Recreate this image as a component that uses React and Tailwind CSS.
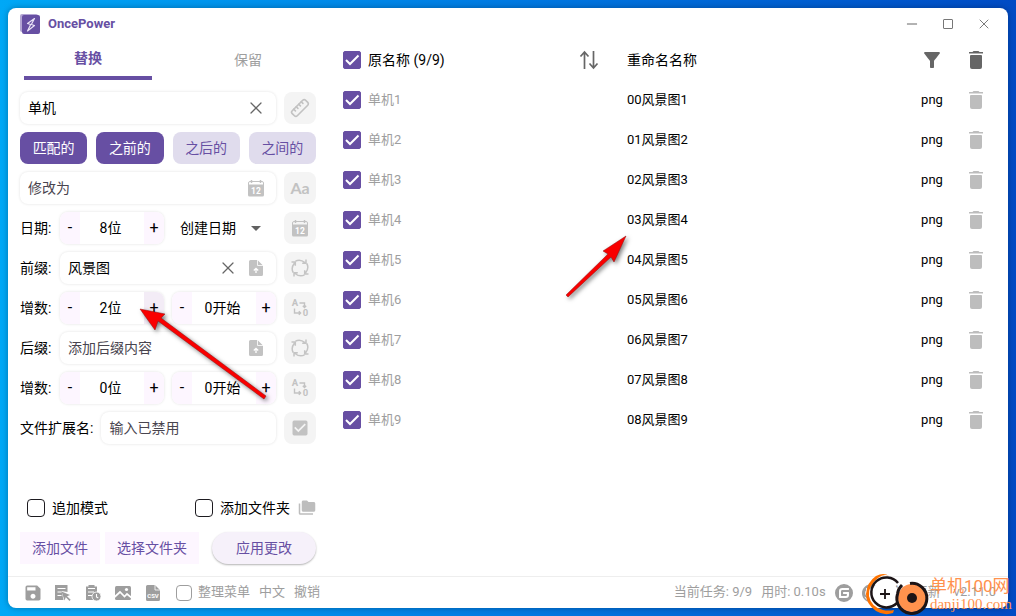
import React, { useState } from "react";
import { MdSave, MdFilterAlt, MdCheckBox, MdFolderCopy, MdArrowDropDown } from "react-icons/md";
import { SiGitee, SiGithub } from "react-icons/si";
import { Ruler, X, Minus } from "lucide-react";

const files = [1, 2, 3, 4, 5, 6, 7, 8, 9].map((n) => ({
  id: n,
  name: `单机${n}`,
  newName: `0${n - 1}风景图${n}`,
  ext: "png",
}));

/* ---------- icons ---------- */

const LogoIcon = () => (
  <svg className="w-5 h-5" viewBox="0 0 20 20" aria-hidden="true">
    <rect x="0" y="0" width="18" height="18" rx="2" fill="#b3a5d3" />
    <rect x="2" y="1" width="18" height="19" rx="2" fill="#674fa3" />
    <path d="M14.5 4.5 7.5 9.5l3.2 1L7.500 17l7-5.500-3.200-1z" fill="none" stroke="#e9e2f6" strokeWidth="1.200" strokeLinejoin="round" />
  </svg>
);

const CalendarIcon = () => (
  <svg className="w-4 h-[18px]" viewBox="0 0 16 18" aria-hidden="true">
    <path d="M2 2.500h12a1.500 1.500 0 0 1 1.500 1.500v2H.5V4A1.500 1.500 0 0 1 2 2.500z" fill="none" stroke="#c2c2c2" />
    <path d="M0 6h16v10a1.500 1.500 0 0 1-1.500 1.500h-13A1.500 1.500 0 0 1 0 16z" fill="#c2c2c2" />
    <path d="M3.500 1v3M12.500 1v3" stroke="#c2c2c2" strokeWidth="1.500" />
    <text x="8" y="15" textAnchor="middle" fontSize="8.500" fontWeight="700" fill="#fff">12</text>
  </svg>
);

const FileUpIcon = () => (
  <svg className="w-4 h-[18px]" viewBox="0 0 16 18" aria-hidden="true">
    <path d="M2.500 1h7L15 6.500v9a1.500 1.500 0 0 1-1.500 1.500h-11A1.500 1.500 0 0 1 1 15.500v-13A1.500 1.500 0 0 1 2.500 1z" fill="#c2c2c2" />
    <path d="M9.500 1v5.500H15" fill="none" stroke="#fff" strokeWidth=".8" />
    <path d="M8 14V9.500M5.800 11.500 8 9.300l2.200 2.200" fill="none" stroke="#fff" strokeWidth="1.300" />
  </svg>
);

const CycleIcon = () => (
  <svg className="w-5 h-5" viewBox="0 0 20 20" fill="none" stroke="#c4c4c4" strokeWidth="1.500" aria-hidden="true">
    {[0, 90, 180, 270].map((angle) => (
      <path key={angle} transform={`rotate(${angle} 10 10)`} d="M5.500 3.200Q10 .6 15 4.500M16 1.500V5.300H12.200" />
    ))}
  </svg>
);

const AlphaNumIcon = () => (
  <svg className="w-5 h-5" viewBox="0 0 20 20" aria-hidden="true">
    <text x="5" y="8" textAnchor="middle" fontSize="9.500" fontWeight="700" fill="#c2c2c2">A</text>
    <text x="15.500" y="18" textAnchor="middle" fontSize="9.500" fontWeight="700" fill="#c2c2c2">0</text>
    <path d="M9.500 5h5v4M12.800 7.700l1.700 1.800 1.700-1.800M4.500 10.500v4.500h6M8.800 13.300l1.800 1.700-1.800 1.700" fill="none" stroke="#c2c2c2" strokeWidth="1.400" />
  </svg>
);

const SortIcon = () => (
  <svg className="w-5 h-5" viewBox="0 0 20 20" fill="none" stroke="#666" strokeWidth="1.700" aria-hidden="true">
    <path d="M5.500 19V2M1.500 6.500l4-4.500 4 4.500M14.500 1v17M10.500 13.500l4 4.500 4-4.500" />
  </svg>
);

const TrashIcon = () => (
  <svg className="w-4 h-[18px]" viewBox="0 0 16 18" fill="currentColor" aria-hidden="true">
    <path d="M5.500 0h5l1 1H15v1.500H1V1h3.500z" />
    <path d="M3 4h10a1 1 0 0 1 1 1v11a2 2 0 0 1-2 2H4a2 2 0 0 1-2-2V5a1 1 0 0 1 1-1z" />
  </svg>
);

const ListPointerIcon = () => (
  <svg className="w-4 h-4" viewBox="0 0 16 16" aria-hidden="true">
    <path d="M0 0h12.500v7l-6-1 2 9H0z" fill="#9e9e9e" />
    <path d="M2.500 3.500h8M2.500 7h4M2.500 10.500h4" stroke="#fff" strokeWidth="1.200" />
    <path d="M6.500 6.500 15 10l-3 1.200 3.700 3.500-1.200 1.200-3.700-3.600L9.500 15.500z" fill="#9e9e9e" />
  </svg>
);

const ClipboardClockIcon = () => (
  <svg className="w-4 h-4" viewBox="0 0 16 16" aria-hidden="true">
    <path d="M1 1.500h2.500V0h6v1.500H12V7l-4 1v7H1z" fill="#9e9e9e" />
    <path d="M3 3.500h7M3 7h6M3 10.500h4" stroke="#fff" strokeWidth="1.200" />
    <circle cx="11.500" cy="11.500" r="4.500" fill="#9e9e9e" stroke="#fff" strokeWidth=".8" />
    <path d="M11.500 9v3l1.800 1" fill="none" stroke="#fff" strokeWidth="1.100" />
  </svg>
);

const PictureIcon = () => (
  <svg className="w-[18px] h-4" viewBox="0 0 18 16" aria-hidden="true">
    <rect x="1" y="1" width="16" height="14" rx="1.500" fill="#9e9e9e" />
    <path d="M0 12.500l6-5.500 4.500 4.500L13 9l5 4" fill="none" stroke="#fff" strokeWidth="1.700" />
    <circle cx="12.500" cy="4.500" r="1.600" fill="#fff" />
  </svg>
);

const CsvIcon = () => (
  <svg className="w-4 h-[18px]" viewBox="0 0 16 18" aria-hidden="true">
    <path d="M2.500 1H10l5 5v9.500a1.500 1.500 0 0 1-1.500 1.500h-11A1.500 1.500 0 0 1 1 15.500v-13A1.500 1.500 0 0 1 2.500 1z" fill="#9e9e9e" />
    <path d="M10 1v5h5" fill="none" stroke="#fff" strokeWidth=".8" />
    <text x="8" y="13.500" textAnchor="middle" fontSize="6" fontWeight="700" fill="#fff">CSV</text>
  </svg>
);

/* ---------- form parts ---------- */

const Checkbox = ({ id, label, checked, onChange, className = "w-[18px] h-[18px] border-[#1d1b20]" }) => (
  <span className="inline-grid place-items-center shrink-0">
    <input
      id={id}
      type="checkbox"
      aria-label={label}
      checked={checked}
      onChange={onChange}
      className={`col-start-1 row-start-1 appearance-none border checked:rounded-xs checked:border-[#674fa3] checked:bg-[#674fa3] rounded ${className}`}
    />
    {checked && (
      <svg className="col-start-1 row-start-1 w-[18px] h-[18px] pointer-events-none" viewBox="0 0 18 18" fill="none" aria-hidden="true">
        <path d="M3 9l4 4 8.500-8.500" stroke="#fff" strokeWidth="2" />
      </svg>
    )}
  </span>
);

const Field = ({ id, label, value, onChange, placeholder, clearable, children }) => (
  <div className="flex-1 min-w-0 h-8 flex items-center gap-1 pl-2 pr-3 bg-white rounded-lg shadow-[0_0_3px_rgba(0,0,0,0.12)]">
    <input
      id={id}
      type="text"
      aria-label={label}
      value={value}
      onChange={(e) => onChange(e.target.value)}
      placeholder={placeholder}
      className="flex-1 min-w-0 bg-transparent text-black placeholder:text-[#49454f] focus:outline-none"
    />
    {clearable && (
      <button type="button" aria-label="清除" onClick={() => onChange("")} className="w-6 h-6 -mr-1 flex items-center justify-center text-[#666]">
        <X size={20} strokeWidth={1.5} />
      </button>
    )}
    {children}
  </div>
);

const Stepper = ({ value, unit, label, active, onChange }) => (
  <div role="group" aria-label={label} className="w-[104px] h-8 flex rounded-lg overflow-hidden bg-white shadow-[0_0_3px_rgba(0,0,0,0.12)]">
    <button type="button" aria-label="减少" className="w-5 bg-[#fdf6ff] text-base" onClick={() => onChange(Math.max(0, value - 1))}>-</button>
    <span className="flex-1 flex items-center justify-center pr-[3px]">{value}{unit}</span>
    <button type="button" aria-label="增加" className={`w-5 text-base ${active ? "bg-[#f3ecf6]" : "bg-[#fdf6ff]"}`} onClick={() => onChange(value + 1)}>+</button>
  </div>
);

const SquareButton = ({ label, children }) => (
  <button type="button" aria-label={label} className="w-8 h-8 shrink-0 flex items-center justify-center rounded-lg bg-[#f4f4f4] text-[#c2c2c2]">
    {children}
  </button>
);

const Row = ({ children }) => <div className="flex items-center gap-2">{children}</div>;

const RowLabel = ({ htmlFor, children }) => (
  <label htmlFor={htmlFor} className="w-8 shrink-0 whitespace-nowrap">{children}</label>
);

/* ---------- overlays ---------- */

const Arrows = () => (
  <svg className="absolute left-0 top-0 w-[1016px] h-[616px] pointer-events-none" viewBox="0 0 1016 616" aria-hidden="true">
    <g fill="#f90000" stroke="#8d1010" strokeWidth=".5" className="drop-shadow-[2px_2px_2px_rgba(0,0,0,0.5)]">
      <path d="M626 236 603 251 608 254 566 295 568 297 611 257 614 262z" />
      <path d="M140 309 155 330 158 321 264 399 266 396 161 318 165 314z" />
    </g>
  </svg>
);

const Watermark = () => (
  <div className="absolute right-1 bottom-0 flex items-center pointer-events-none">
    <svg className="w-[66px] h-[44px]" viewBox="0 0 66 44" fill="none" aria-hidden="true">
      <circle cx="21" cy="22" r="13" fill="#fff" />
      <path d="M25 4Q20 1 14 6Q4 14 5 24Q7 35 19 38Q24 39 30 38L29 41Q20 44 12 39Q2 32 2 22Q3 10 12 4Q20 0 25 4z" fill="#ff7300" />
      <path d="M34 11A15 15 0 1 0 33 31" stroke="#1c1416" strokeWidth="2.500" />
      <path d="M21 17v10M16 22h10" stroke="#1c1416" strokeWidth="1.800" />
      <circle cx="48" cy="26" r="14" fill="#ff924d" />
      <path d="M46 11.500A15 15 0 1 1 33.500 22Q34 17 38 13" stroke="#1c1416" strokeWidth="3" />
      <circle cx="48" cy="26" r="5" fill="#1c1416" />
    </svg>
    <div className="text-[#ff914d] whitespace-nowrap">
      <p className="text-[17px] leading-5">单机100网</p>
      <p className="text-[15px] leading-4 font-['Liberation_Serif',serif]">danji100.com</p>
    </div>
  </div>
);

const modes = ["匹配的", "之前的", "之后的", "之间的"];

const App = () => {
  const [tab, setTab] = useState("替换");
  const [activeModes, setActiveModes] = useState(["匹配的", "之前的"]);
  const [match, setMatch] = useState("单机");
  const [modify, setModify] = useState("");
  const [prefix, setPrefix] = useState("风景图");
  const [suffix, setSuffix] = useState("");
  const [ext, setExt] = useState("");
  const [dateDigits, setDateDigits] = useState(8);
  const [preDigits, setPreDigits] = useState(2);
  const [preStart, setPreStart] = useState(0);
  const [sufDigits, setSufDigits] = useState(0);
  const [sufStart, setSufStart] = useState(0);
  const [append, setAppend] = useState(false);
  const [addFolder, setAddFolder] = useState(false);
  const [tidy, setTidy] = useState(false);
  const [selected, setSelected] = useState(files.map((f) => f.id));

  const toggleMode = (mode) => {
    setActiveModes((prev) => (prev.includes(mode) ? prev.filter((m) => m !== mode) : [...prev, mode]));
  };

  const toggleFile = (id) => {
    setSelected((prev) => (prev.includes(id) ? prev.filter((i) => i !== id) : [...prev, id]));
  };

  const allSelected = selected.length === files.length;

  return (
    <div className="relative min-h-screen flex p-2 overflow-hidden bg-linear-to-r from-[#00a8f6] via-[#007ae2] to-[#004bc4] text-sm text-black font-[Roboto,'Noto_Sans_CJK_SC',sans-serif]">
      <div className="flex-1 min-w-0 flex flex-col bg-white rounded-lg shadow-[0_0_6px_rgba(0,0,0,0.3)]">
        {/* Title bar */}
        <header className="h-8 flex items-center px-3">
          <LogoIcon />
          <h1 className="ml-2 text-[13px] font-bold text-[#674fa3]">OncePower</h1>
          <div className="ml-auto flex gap-3 text-[#666]">
            <button type="button" aria-label="最小化" className="w-6 h-6 flex items-center justify-center">
              <Minus size={16} strokeWidth={1.5} />
            </button>
            <button type="button" aria-label="最大化" className="w-6 h-6 flex items-center justify-center">
              <span className="w-[10px] h-[10px] border border-[#777] rounded-[1px]"></span>
            </button>
            <button type="button" aria-label="关闭" className="w-6 h-6 flex items-center justify-center">
              <X size={16} strokeWidth={1.3} />
            </button>
          </div>
        </header>

        <main className="flex-1 flex">
          {/* Left panel */}
          <section className="w-80 shrink-0 flex flex-col">
            <div role="tablist" className="flex h-10 mb-3">
              {["替换", "保留"].map((name) => (
                <button
                  key={name}
                  type="button"
                  role="tab"
                  aria-selected={tab === name}
                  onClick={() => setTab(name)}
                  className={`flex-1 mx-4 ${tab === name ? "border-b-4 border-[#674fa3] text-[#674fa3] font-bold" : "text-[#9e9e9e]"}`}
                >
                  {name}
                </button>
              ))}
            </div>

            <form className="flex-1 flex flex-col gap-2 px-3" onSubmit={(e) => e.preventDefault()}>
              <Row>
                <Field id="match" label="匹配内容" value={match} onChange={setMatch} clearable />
                <SquareButton label="长度"><Ruler size={20} strokeWidth={2} className="-rotate-90" /></SquareButton>
              </Row>

              <div className="flex gap-[9px]">
                {modes.map((mode) => (
                  <button
                    key={mode}
                    type="button"
                    onClick={() => toggleMode(mode)}
                    className={`flex-1 h-8 rounded-lg ${activeModes.includes(mode) ? "bg-[#674fa3] text-white" : "bg-[#e0dced] text-[#674fa3]"}`}
                  >
                    {mode}
                  </button>
                ))}
              </div>

              <Row>
                <Field id="modify" label="修改为" value={modify} onChange={setModify} placeholder="修改为">
                  <CalendarIcon />
                </Field>
                <SquareButton label="大小写"><span className="font-[Lato,sans-serif] text-base font-bold">Aa</span></SquareButton>
              </Row>

              <Row>
                <RowLabel htmlFor="date-type">日期:</RowLabel>
                <Stepper label="日期位数" value={dateDigits} unit="位" onChange={setDateDigits} />
                <div className="flex-1 grid items-center">
                  <select id="date-type" className="col-start-1 row-start-1 appearance-none bg-transparent h-8 pl-2 focus:outline-none">
                    <option>创建日期</option>
                    <option>修改日期</option>
                  </select>
                  <MdArrowDropDown size={24} className="col-start-1 row-start-1 justify-self-end mr-2 text-[#616161] pointer-events-none" />
                </div>
                <SquareButton label="使用日期"><CalendarIcon /></SquareButton>
              </Row>

              <Row>
                <RowLabel htmlFor="prefix">前缀:</RowLabel>
                <Field id="prefix" value={prefix} onChange={setPrefix} clearable>
                  <span className="ml-2"><FileUpIcon /></span>
                </Field>
                <SquareButton label="循环前缀"><CycleIcon /></SquareButton>
              </Row>

              <Row>
                <span className="w-8 shrink-0 whitespace-nowrap">增数:</span>
                <Stepper label="前缀增数位数" value={preDigits} unit="位" active onChange={setPreDigits} />
                <Stepper label="前缀增数开始" value={preStart} unit="开始" onChange={setPreStart} />
                <SquareButton label="交换前缀"><AlphaNumIcon /></SquareButton>
              </Row>

              <Row>
                <RowLabel htmlFor="suffix">后缀:</RowLabel>
                <Field id="suffix" value={suffix} onChange={setSuffix} placeholder="添加后缀内容">
                  <FileUpIcon />
                </Field>
                <SquareButton label="循环后缀"><CycleIcon /></SquareButton>
              </Row>

              <Row>
                <span className="w-8 shrink-0 whitespace-nowrap">增数:</span>
                <Stepper label="后缀增数位数" value={sufDigits} unit="位" onChange={setSufDigits} />
                <Stepper label="后缀增数开始" value={sufStart} unit="开始" onChange={setSufStart} />
                <SquareButton label="交换后缀"><AlphaNumIcon /></SquareButton>
              </Row>

              <Row>
                <label htmlFor="ext" className="shrink-0">文件扩展名:</label>
                <Field id="ext" value={ext} onChange={setExt} placeholder="输入已禁用" />
                <SquareButton label="修改扩展名"><MdCheckBox size={20} /></SquareButton>
              </Row>

              <div className="mt-auto flex items-center pl-[7px] h-8">
                <Checkbox id="append" checked={append} onChange={() => setAppend(!append)} />
                <label htmlFor="append" className="ml-[7px]">追加模式</label>
                <span className="ml-auto flex items-center">
                  <Checkbox id="add-folder" checked={addFolder} onChange={() => setAddFolder(!addFolder)} />
                  <label htmlFor="add-folder" className="ml-[7px]">添加文件夹</label>
                  <MdFolderCopy size={18} className="ml-2 text-[#bdbdbd]" />
                </span>
              </div>

              <div className="flex items-center mb-3 text-[#674fa3]">
                <button type="button" className="h-8 px-3 bg-[#fdf6ff]">添加文件</button>
                <button type="button" className="h-8 px-3 ml-[5px] bg-[#fdf6ff]">选择文件夹</button>
                <button type="button" className="h-8 px-6 ml-auto rounded-full bg-[#f6f1fa] shadow-[0_1px_2px_rgba(0,0,0,0.3)]">应用更改</button>
              </div>
            </form>
          </section>

          {/* File list */}
          <section className="flex-1 min-w-0 pr-4">
            <table className="w-full table-fixed text-left">
              <thead>
                <tr className="h-10">
                  <th className="w-10 p-0">
                    <span className="flex justify-end pr-[7px]">
                      <Checkbox label="全选" checked={allSelected} onChange={() => setSelected(allSelected ? [] : files.map((f) => f.id))} />
                    </span>
                  </th>
                  <th className="w-[39%] p-0 font-normal">
                    <span className="flex items-center justify-between pr-7">
                      原名称 ({selected.length}/{files.length})
                      <button type="button" aria-label="排序"><SortIcon /></button>
                    </span>
                  </th>
                  <th className="p-0 font-normal">重命名名称</th>
                  <th className="w-14 p-0 text-[#666]">
                    <button type="button" aria-label="筛选" className="flex mx-auto"><MdFilterAlt size={24} /></button>
                  </th>
                  <th className="w-8 p-0 text-[#666]">
                    <button type="button" aria-label="清空" className="flex mx-auto"><TrashIcon /></button>
                  </th>
                </tr>
              </thead>
              <tbody className="text-[13px]">
                {files.map((file) => (
                  <tr key={file.id} className="h-10">
                    <td className="p-0">
                      <span className="flex justify-end pr-[7px]">
                        <Checkbox label={file.name} checked={selected.includes(file.id)} onChange={() => toggleFile(file.id)} />
                      </span>
                    </td>
                    <td className="p-0 text-[#9e9e9e]">{file.name}</td>
                    <td className="p-0">{file.newName}</td>
                    <td className="p-0 text-center">{file.ext}</td>
                    <td className="p-0 text-[#bdbdbd]">
                      <button type="button" aria-label="删除" className="flex mx-auto"><TrashIcon /></button>
                    </td>
                  </tr>
                ))}
              </tbody>
            </table>
          </section>
        </main>

        {/* Status bar */}
        <footer className="h-8 flex items-center gap-[9px] px-3 border-t border-[#eee] text-[13px] text-[#9e9e9e]">
          <div className="flex items-center gap-[10px] pl-[3px]">
            <button type="button" aria-label="保存" className="w-5 flex justify-center"><MdSave size={20} /></button>
            <button type="button" aria-label="选择列表" className="w-5 flex justify-center"><ListPointerIcon /></button>
            <button type="button" aria-label="历史" className="w-5 flex justify-center"><ClipboardClockIcon /></button>
            <button type="button" aria-label="图片" className="w-5 flex justify-center"><PictureIcon /></button>
            <button type="button" aria-label="导出 CSV" className="w-5 flex justify-center"><CsvIcon /></button>
          </div>
          <span className="flex items-center ml-1 gap-[6px]">
            <Checkbox id="tidy" checked={tidy} onChange={() => setTidy(!tidy)} className="w-4 h-4 border-[#9e9e9e]" />
            <label htmlFor="tidy">整理菜单</label>
          </span>
          <button type="button">中文</button>
          <button type="button">撤销</button>
          <span className="ml-auto">当前任务: 9/9</span>
          <span>用时: 0.10s</span>
          <a href="#gitee" aria-label="Gitee"><SiGitee size={18} /></a>
          <a href="#github" aria-label="GitHub"><SiGithub size={18} /></a>
          <button type="button">检查更新</button>
          <span className="ml-1">v2.11.0</span>
        </footer>
      </div>

      <Arrows />
      <Watermark />
    </div>
  );
};

export default App;
